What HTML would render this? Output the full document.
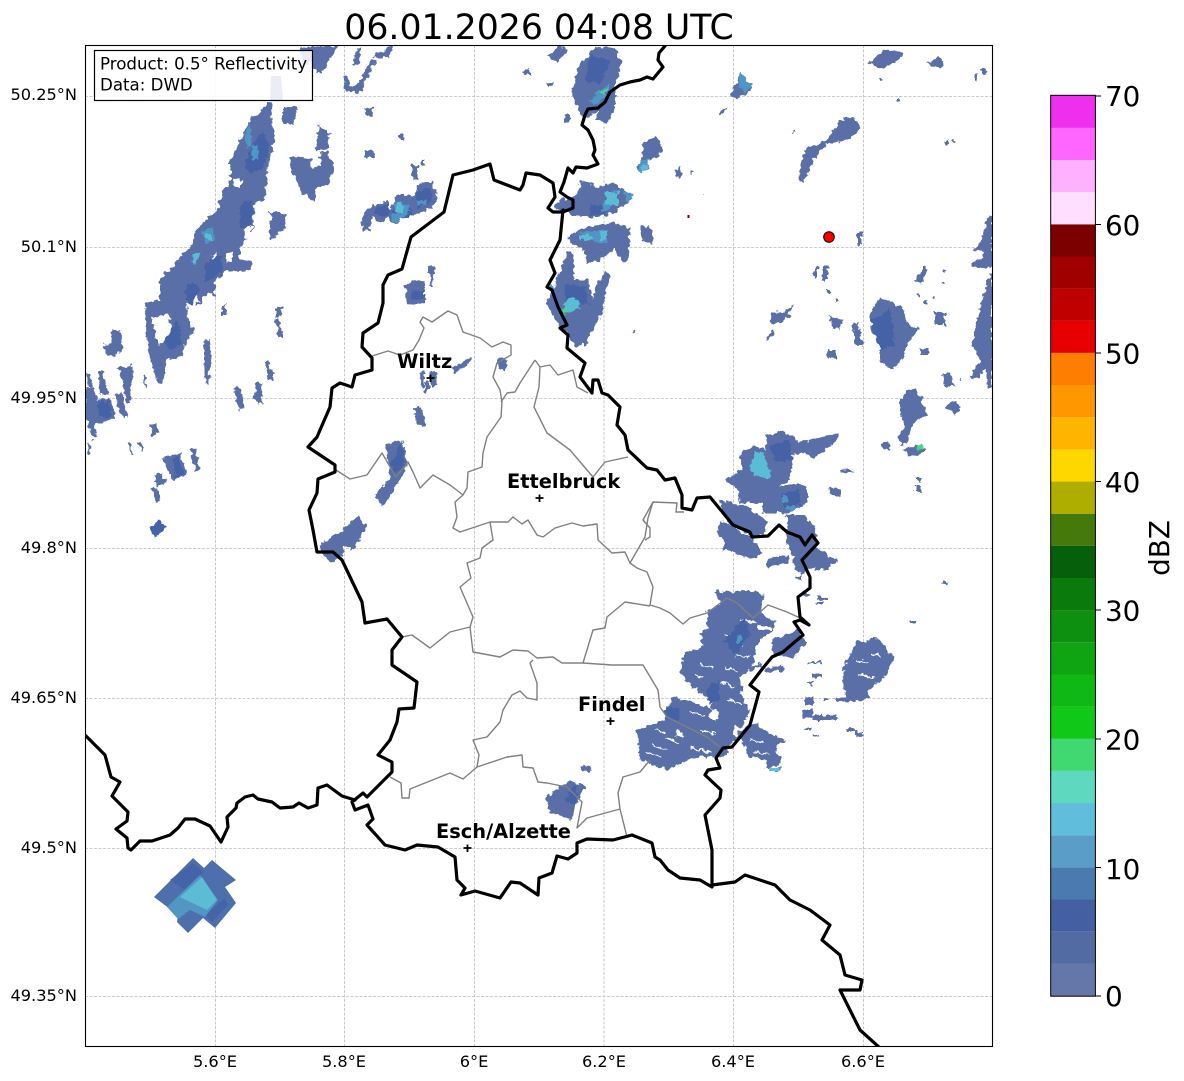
<!DOCTYPE html>
<html><head><meta charset="utf-8"><title>Radar</title>
<style>html,body{margin:0;padding:0;background:#fff}svg{display:block}text{font-family:"DejaVu Sans","Liberation Sans",sans-serif;fill:#000}</style>
</head><body>
<svg xmlns="http://www.w3.org/2000/svg" width="1184" height="1081" viewBox="0 0 1184 1081">
<defs><clipPath id="ax"><rect x="85.5" y="45.5" width="907" height="1001"/></clipPath>
<filter id="r" x="0" y="0" width="1184" height="1081" filterUnits="userSpaceOnUse" color-interpolation-filters="sRGB"><feTurbulence type="fractalNoise" baseFrequency=".2" numOctaves="2" seed="3" result="n"/><feDisplacementMap in="SourceGraphic" in2="n" scale="7" xChannelSelector="R" yChannelSelector="G"/></filter></defs>
<rect width="1184" height="1081" fill="#fff"/>
<text x="539" y="39" font-size="34.7" text-anchor="middle">06.01.2026 04:08 UTC</text>
<g clip-path="url(#ax)">
<!-- grid -->
<g stroke="#bdbdbd" stroke-width=".8" stroke-dasharray="3 1.5" fill="none">
<path d="M215.5 45V1046M344.5 45V1046M474.5 45V1046M604 45V1046M733.5 45V1046M863.5 45V1046"/>
<path d="M85 96.5H992M85 247.5H992M85 398.5H992M85 548.5H992M85 698.5H992M85 848.5H992M85 996.5H992"/>
</g>
<g filter="url(#r)">
<!-- radar base -->
<path fill="#5a6fa8" d="M300 47L340 45 332 55 322 72 316 72 312 62 303 65ZM357 47L362 47 358 65 352 65ZM373 56L390 47 395 45 388 58 380 58ZM343 76L345 90 360 93 370 72 377 62 372 58 365 70 358 85 350 86 347 76Z
M267 102L273 102 272 120 275 140 267 172 265 200 255 202 253 230 240 247 240 260 252 262 252 270 223 272 215 283 215 295 208 293 197 307 187 303 188 320 195 330 183 347 182 357 167 360 163 383 158 383 147 347 145 303 160 300 160 278 173 267 192 243 195 230 218 210 223 188 230 183 230 160 250 120 262 110Z
M283 107L298 107 293 125 283 123ZM316 124L330 133 327 150 316 150 320 125ZM291 156L312 158 310 168 322 167 320 152 328 152 334 168 328 185 317 187 315 203 302 193 290 165ZM270 212L280 212 287 215 284 230 272 240 270 240ZM365 108H373V116H365ZM365 150H375V158H365ZM400 133H404V140H400ZM412 165H418V180H412ZM422 160H425V167H422Z
M362 217L368 208 387 200 390 210 397 195 415 195 420 182 433 183 437 197 432 208 415 215 400 217 400 223 392 223 388 217 382 223 372 217 370 230 363 230Z
M405 285L418 280 425 283 425 302 420 303 410 305 406 298ZM427 267H435V273H433L432 287H430L430 273H427Z
M451 368L467 360 472 356 473 360 462 368 454 373ZM497 358L508 359 505 370 500 370ZM425 382H429V393H425ZM429 372H437V385H431ZM420 372H424V388H421Z
M413 407L420 407 427 425 421 428 416 420ZM386 445L403 440 407 460 402 478 382 508 375 493 390 480 387 453Z
M320 545L333 535 343 530 358 515 367 527 353 550 343 545 343 555 332 563 323 557Z
M545 798L567 782 577 783 585 787 575 807 570 820 550 812ZM583 765L593 769 590 774 581 769Z
M85 388L93 387 97 400 110 397 116 418 95 424 97 438 93 439 85 415ZM98 372H103L108 395H100ZM104 345L112 343 112 330 121 330 122 353 107 357ZM118 367L132 365 133 377 130 403 127 403 122 380ZM114 395L122 393 127 417 123 417 117 405ZM87 373H90L92 387H88Z
M149 425L156 423 159 434 153 436ZM163 458L180 453 188 475 173 481ZM154 475L162 472 167 483 157 486ZM152 488L157 487 161 499 156 501ZM190 449L196 448 200 470 196 472ZM234 389L241 388 244 408 239 410ZM256 383L261 382 263 403 257 405 254 397ZM265 370L274 369 274 378 267 381ZM266 360H269V370H266ZM204 340L210 339 211 360 208 385 206 385 204 363ZM128 443L131 443 133 455 131 455ZM138 441L141 441 143 452 141 452ZM86 442H89L90 455H88ZM142 375H145L147 388H145ZM275 320H279L283 337H279ZM275 307H283L280 318H275ZM222 305H226V315H222Z
M731 95L740 73 752 85 750 92 737 99ZM718 115L723 108 728 108 722 115ZM867 63L885 50 903 52 900 58 888 67 882 67 873 65ZM927 62L940 57 944 62 940 68 932 67ZM980 70L984 68 988 73 984 75ZM975 74H978V78H975ZM798 180L805 150 827 140 840 120 853 117 860 127 853 137 840 142 828 143 815 157 810 170 802 182Z
M642 160L643 143 655 135 663 147 658 157 648 160 648 170 638 172 635 167ZM675 170L680 167 682 175 677 178ZM642 227L650 225 653 243 648 243 642 238ZM857 233H862V245H857Z
M973 250L980 243 988 217 992 215V267L973 268 973 262 983 258 982 252ZM972 343L980 307 990 273 992 273V387H987V367L977 378 970 377 980 360Z
M870 313L880 298 903 307 907 323 920 330 910 340 903 357 893 370 880 360 880 340 872 333ZM770 313L787 310 793 305 788 318 772 325ZM767 337L773 330 774 335 768 340ZM853 323H858L863 345H855ZM917 277L926 265 928 270 921 285 915 280ZM935 312H945V325H935ZM827 350H837V358H827ZM920 348H928V355H920ZM942 373L950 373 955 387 945 387ZM822 267H828V280H822ZM813 270H818V277H813ZM828 315L842 320 840 330 832 328Z
M725 480L742 470 740 452 753 447 767 450 765 436 783 431 800 442 838 433 837 440 822 452 812 458 803 452 792 455 790 480 778 487 800 483 807 488 807 503 787 513 763 513 762 503 740 503 738 493 737 488Z
M718 500L750 508 768 522 765 533 752 537 730 525ZM716 533L722 520 753 540 763 553 752 559 723 550 725 542ZM766 558L788 555 790 562 768 567ZM785 515L803 515 813 525 818 533 815 547 828 555 838 560 828 567 810 568 802 575 795 570 793 558 790 550 785 540 788 525ZM842 469L853 470 853 473 842 473ZM829 488L842 489 842 497 832 496Z
M900 400L922 400 927 415 913 423 907 443 900 445 898 438 905 427 900 415ZM905 392L915 388 922 400H902ZM945 407L953 400 962 407 955 415ZM902 450L917 445 927 450 915 457 907 455ZM882 443H890V450H885ZM917 478H921V481H917ZM915 486H921V491H915Z
M715 590L727 592 745 590 765 595 760 613 775 622 772 630 758 643 752 667 762 663 740 693 747 705 750 710 740 730 755 723 768 733 785 740 775 747 783 762 773 768 765 768 767 760 748 757 740 737 727 747 728 755 713 757 693 757 668 770 640 760 637 730 665 720 672 697 712 708 713 702 692 687 680 672 685 653 703 647 700 633 708 627 707 610 720 605Z
M772 640L797 630 807 643 793 657 773 657ZM765 668L783 665 785 670 766 672ZM815 567H828V570H815ZM802 592H810V597H802ZM797 575H803V580H797Z
M845 663L857 642 878 638 888 653 895 657 888 670 882 680 870 687 868 697 860 702 845 702 843 673ZM805 697H813V705H805ZM803 710H813V718H803ZM813 715H837V720H813ZM813 673H822V678H813ZM807 682H813V684H807ZM807 661H822V663H807ZM847 728H855V732H847ZM855 732H863V737H855ZM817 597H828V600H817ZM817 602H823V604H817ZM910 620H917V623H910ZM942 582H948V584H942ZM823 698H828V701H823ZM837 698H845V701H837ZM804 728H811V730H804ZM812 735H820V737H812Z
M573 90L578 67 595 47 615 47 622 63 615 87 615 107 608 123 595 120 597 112 583 118 575 103ZM547 55L560 47 568 50 557 62ZM524 70L530 70 530 75 524 75ZM564 115H570V122H564ZM548 82H552V86H548Z
M553 207L560 200 575 197 582 180 598 187 613 183 633 195 628 203 613 213 600 217 573 217 567 210 557 210ZM568 237L582 228 612 223 630 227 630 243 627 262 622 260 615 248 600 260 587 263 583 247 573 245ZM547 303L557 280 567 253 573 253 574 280 588 280 592 300 597 285 604 273 610 273 606 293 600 318 590 335 585 345 575 345 568 335 560 327 550 310ZM632 330H635V333H632ZM880 78H883V82H880Z
M849 128H852V131H849ZM792 130H795V133H792ZM945 140H948V145H945ZM953 140H955V143H953ZM975 78H978V80H975ZM897 97H900V100H897ZM692 172H694V175H692ZM702 194H704V196H702ZM816 266H819V270H816ZM826 290H829V293H826ZM836 300H838V303H836ZM898 330H901V333H898ZM925 301H928V304H925ZM917 294H919V296H917ZM943 270H946V273H943ZM941 281H944V284H941ZM932 296H935V299H932ZM960 378H962V381H960Z"/>
<!-- holes -->
<path fill="#fff" d="M152 318L168 314 174 335 158 345ZM188 300L194 288 198 300 195 310ZM232 178L243 180 240 188 233 187ZM244 226L252 224 252 245 246 247ZM212 255L218 254 218 263 212 263ZM227 253L232 252 232 262 226 262ZM747 670L762 668 745 692 740 680ZM712 708L720 712 716 722 708 716ZM735 725L742 728 737 738 732 734ZM678 730L684 732 681 738 676 736ZM758 625L772 627 770 630 758 630Z"/>
<path stroke="#fff" stroke-width="1.4" fill="none" d="M741 620L757 623M725 635L740 638M730 645L742 647M735 655L750 658M700 665L712 668M695 675L705 678M725 668L738 671M720 683L735 686M728 700L742 703M665 738L680 742M652 745L668 750M645 752L660 757M655 730L665 733M690 712L705 716M700 730L715 734M690 748L712 752M750 740L762 743M755 752L770 754M855 660L868 662M872 655L880 656M858 675L875 677"/>
<!-- radar dark -->
<path fill="#4662a6" d="M245 160L262 130 270 145 262 170 248 172ZM240 205L252 200 252 225 240 228ZM205 262L222 255 223 272 205 283ZM185 290L192 280 200 290 190 305ZM165 340L178 320 182 345 170 350ZM97 405L108 400 112 415 100 418ZM172 458L178 456 184 475 176 478ZM391 210L410 207 412 216 392 218ZM375 208L388 204 388 215 375 215ZM416 190L430 188 432 203 416 208ZM390 462L402 452 405 465 395 475ZM395 450L402 445 404 455 398 458ZM425 290L410 292 412 300 424 298ZM150 528L160 520 165 528 155 538ZM570 790L578 785 575 805 565 800ZM770 445L790 440 792 460 775 462ZM780 495L800 490 800 505 785 510ZM725 640L745 618 750 635 735 655ZM705 690L718 680 720 700 710 705ZM665 705L680 710 678 722 665 718ZM870 320L890 310 895 345 880 350ZM590 205L608 205 605 215 590 215ZM590 55L610 60 600 85 585 80ZM565 285L585 285 590 305 565 300Z"/>
<!-- radar light blue -->
<path fill="#5096c4" d="M245 135L250 125 252 145 246 148ZM252 145H258V160H252ZM203 232L212 225 215 240 205 243ZM192 254H198V265H192ZM393 203L410 205 408 214 398 218ZM392 213H400V222H393ZM416 200H425V205H416ZM578 233L607 230 608 242 595 243 590 237ZM600 207L612 190 620 190 613 207 603 212ZM623 190L633 195 628 203ZM640 160L650 160 647 170 638 172ZM590 100L603 87 610 83 603 98 595 105ZM548 288L552 285 555 290ZM740 73L752 85 745 92 738 85ZM782 495H787V503H782ZM786 505H795V510H786ZM736 635H742V642H736ZM778 768H783V770H773Z"/>
<path fill="#5bbcd6" d="M750 467L755 450 765 455 772 478 755 477ZM562 307L570 297 578 300 580 308 565 315ZM193 253L200 252 198 262 193 262ZM205 233H212V240H205ZM397 203H403V213H397ZM578 235H592V240H580ZM600 232H607V240H600ZM605 192H618V205H605ZM603 92L608 86 605 96ZM642 165H647V170H642Z"/>
<path fill="#45d880" d="M562 310L568 308 565 316ZM600 93L607 87 603 96ZM915 447L922 445 923 449 917 450Z"/>
</g>
<rect x="769" y="768" width="10" height="3" fill="#62bfdc"/>
<rect x="687.5" y="215" width="2" height="3" fill="#800000"/>
<!-- diamond -->
<path fill="#4d6fab" d="M154 897L193 858 204 868 212 860 236 880 225 887 236 903 215 928 203 918 188 933 177 922 178 915Z"/>
<path fill="#4564a8" d="M170 880L193 863 204 872 185 890ZM205 915L225 898 228 905 212 922Z"/>
<path fill="#5097c4" d="M167 907L200 875 218 900 205 917 190 910 178 919Z"/>
<path fill="#5cbcd6" d="M180 897L202 877 217 900 207 910Z"/>
<!-- gray borders -->
<g fill="none" stroke="#808080" stroke-width="1.4" stroke-linejoin="round">
<path d="M372 356L388 351 400 355 413 350 419 340 424 328 420 322 423 317 432 322 448 311 457 315 463 332 480 338 492 347 503 342 511 345 511 355 497 363 493 377 500 390 502 402 501 417 487 437 483 453 482 467 468 472 467 488 463 495 455 502 457 517 453 528 460 532 490 522 508 522 513 517 522 524 528 520 537 535 543 537 555 528 572 523 583 526 597 524 598 540 612 553 625 552 630 563 637 568 647 572 653 587 650 605 660 608 670 613 683 624 690 618 707 613 727 598 737 603 753 618 768 605 787 612 800 618"/>
<path d="M630 563L645 537 648 518 653 502 677 503 676 512 684 512M653 502L643 520 650 528 650 537 645 540"/>
<path d="M535 360L540 367 550 365 558 375 573 370 577 387 588 393M535 360L520 383 515 392 507 393 501 402M540 367L539 387 534 407 547 433 570 450 593 477 605 462 628 457"/>
<path d="M336 470L350 479 367 475 382 453 396 477 408 462 413 472 420 488 433 475 450 485 463 495"/>
<path d="M402 637L412 635 430 648 450 632 470 627 473 617 460 587 471 578 467 563 480 558 482 548 493 540 490 522M470 627L473 652 500 657 513 650 528 651 537 658 553 657 562 663 583 663 593 630 605 628 607 617 625 602 650 606"/>
<path d="M583 663L612 665 643 665 658 690 660 707 667 717 683 725 707 737 720 747M533 660L530 663 537 683 537 700 527 698 520 691 512 695 503 710 500 722 487 737 473 740 479 755 477 767 463 779 450 773 410 789 409 798 402 798 401 783 390 777"/>
<path d="M477 767L507 757 522 755 523 767 533 768 538 782 547 783 567 787 582 802 577 828 587 818 620 809 627 837M620 809L618 793 623 777 640 772 650 760"/>
</g>
<!-- black borders -->
<g fill="none" stroke="#000" stroke-width="3.2" stroke-linejoin="round" stroke-linecap="round">
<path d="M665 46L659 53 658 60 663 67 658 73 653 79 647 77 640 80 630 82 620 85 610 92 605 102 598 108 588 109 585 115 582 125 588 130 593 140 595 150 593 155 598 164 587 168 576 167 573 173 568 168 564 182 560 192 567 197 573 200 573 208 563 212 553 212 548 208 555 197 553 183 540 175 526 173 523 185 520 190 494 180 490 164 473 170 453 175 444 212 411 237 402 269 388 275 383 285 383 303 378 323 363 333 362 347 372 358 372 370 355 375 352 387 340 383 332 388 330 407 317 437 308 447 335 465 335 472 318 479 317 493 309 510 313 530 317 552 333 552 342 560 362 602 365 623 387 619 402 637 392 650 392 665 417 682 414 708 399 709 397 722 390 740 378 755 392 762 392 772 367 797 363 793 352 802 355 810 368 805 373 819 367 825 385 845 405 850 417 845 438 847 455 857 457 880 465 888 461 895 475 891 500 898 511 882 520 883 538 895 539 878 552 873 557 856 568 859 577 853 577 843 587 839 613 840 632 835 652 843 655 857 660 860 668 870 680 878 700 880 712 887 712 850 705 815 720 798 721 790 705 775 708 770 720 768 716 758 723 748 732 747 750 725 759 692 750 685 763 668 772 657 783 652 803 635 794 622 800 620 809 625 800 617 798 597 810 588 810 577 802 560 818 543 812 535 805 545 800 537 787 532 779 525 768 536 752 537 750 532 733 525 710 497 697 498 692 510 682 508 682 495 675 478 665 480 657 470 647 468 628 450 625 435 617 425 620 407 608 395 602 393 598 380 593 380 592 393 580 377 585 363 567 348 568 335 560 328 567 325 558 307 552 290 547 287 555 273 550 260 560 240 563 210"/>
<path d="M712 885L735 882 745 875 760 880 775 885 790 900 810 910 830 925 822 940 840 955 845 975 862 980 860 990 840 990 850 1010 860 1030 880 1048"/>
<path d="M85 735L105 755 111 777 120 782 112 796 128 812 127 821 116 829 127 838 128 848 131 850 140 841 152 841 170 835 178 828 185 819 195 819 210 826 221 842 228 827 227 817 236 808 237 803 245 797 253 795 258 799 272 802 280 808 293 807 299 803 308 808 317 805 318 788 327 785 342 796 355 800"/>
</g>
<!-- faint streak under legend -->
<path fill="#5a6fa8" d="M271 76L281 76 283 100 270 100Z"/>
</g>
<!-- legend -->
<rect x="94.5" y="50.5" width="218" height="50" fill="#fff" fill-opacity=".88" stroke="#000" stroke-width="1.2"/>
<text x="100" y="69.5" font-size="16.65">Product: 0.5° Reflectivity</text>
<text x="100" y="90.5" font-size="16.65">Data: DWD</text>
<!-- frame -->
<rect x="85.5" y="45.5" width="907" height="1001" fill="none" stroke="#000" stroke-width="1.1"/>
<!-- city labels -->
<g font-size="19.4" font-weight="700">
<text x="397" y="368">Wiltz</text>
<text x="507" y="488">Ettelbruck</text>
<text x="578" y="711">Findel</text>
<text x="436" y="838">Esch/Alzette</text>
</g>
<g stroke="#000" stroke-width="1.8" fill="none">
<path d="M426.5 378H434.5M430.5 374.5V382M535.5 498H543.5M539.5 494.5V502M606.5 721H614.5M610.5 717.5V725M463.5 848H471.5M467.5 844.5V852"/>
</g>
<circle cx="829" cy="237" r="5.3" fill="#ff0000" stroke="#000" stroke-width="1"/>
<!-- axis labels -->
<g font-size="16.2" text-anchor="end">
<text x="77" y="100">50.25°N</text>
<text x="77" y="252">50.1°N</text>
<text x="77" y="403">49.95°N</text>
<text x="77" y="553">49.8°N</text>
<text x="77" y="703">49.65°N</text>
<text x="77" y="853">49.5°N</text>
<text x="77" y="1001">49.35°N</text>
</g>
<g font-size="16.2" text-anchor="middle">
<text x="215" y="1067">5.6°E</text>
<text x="344" y="1067">5.8°E</text>
<text x="474" y="1067">6°E</text>
<text x="604" y="1067">6.2°E</text>
<text x="733" y="1067">6.4°E</text>
<text x="863" y="1067">6.6°E</text>
</g>
<!-- colorbar -->
<g>
<rect x="1051" y="963.8" width="44" height="32.3" fill="#6577a8"/>
<rect x="1051" y="931.7" width="44" height="32.2" fill="#526ba2"/>
<rect x="1051" y="899.5" width="44" height="32.2" fill="#4460a3"/>
<rect x="1051" y="867.4" width="44" height="32.2" fill="#4a7ab0"/>
<rect x="1051" y="835.2" width="44" height="32.2" fill="#5a9dc8"/>
<rect x="1051" y="803" width="44" height="32.2" fill="#60bedc"/>
<rect x="1051" y="770.9" width="44" height="32.2" fill="#5fd8c0"/>
<rect x="1051" y="738.7" width="44" height="32.2" fill="#40d870"/>
<rect x="1051" y="706.6" width="44" height="32.2" fill="#10c818"/>
<rect x="1051" y="674.4" width="44" height="32.2" fill="#0fb814"/>
<rect x="1051" y="642.3" width="44" height="32.2" fill="#0fa512"/>
<rect x="1051" y="610.1" width="44" height="32.2" fill="#0d8f10"/>
<rect x="1051" y="578" width="44" height="32.2" fill="#0b7a0d"/>
<rect x="1051" y="545.8" width="44" height="32.2" fill="#065f0a"/>
<rect x="1051" y="513.7" width="44" height="32.2" fill="#457a0a"/>
<rect x="1051" y="481.5" width="44" height="32.2" fill="#aeae00"/>
<rect x="1051" y="449.4" width="44" height="32.2" fill="#ffd700"/>
<rect x="1051" y="417.2" width="44" height="32.2" fill="#ffb400"/>
<rect x="1051" y="385" width="44" height="32.2" fill="#ff9800"/>
<rect x="1051" y="352.9" width="44" height="32.2" fill="#ff7d00"/>
<rect x="1051" y="320.7" width="44" height="32.2" fill="#e60000"/>
<rect x="1051" y="288.6" width="44" height="32.2" fill="#c00000"/>
<rect x="1051" y="256.4" width="44" height="32.2" fill="#a00000"/>
<rect x="1051" y="224.3" width="44" height="32.2" fill="#7d0000"/>
<rect x="1051" y="192.1" width="44" height="32.2" fill="#ffdfff"/>
<rect x="1051" y="160" width="44" height="32.2" fill="#ffb0ff"/>
<rect x="1051" y="127.8" width="44" height="32.2" fill="#ff66ff"/>
<rect x="1051" y="95.5" width="44" height="32.4" fill="#ee30ee"/>
</g>
<rect x="1050.7" y="95.3" width="44.7" height="900.9" fill="none" stroke="#000" stroke-width="1"/>
<path d="M1095 96H1101M1095 224.5H1101M1095 353H1101M1095 481.5H1101M1095 610H1101M1095 739H1101M1095 867.5H1101M1095 996H1101" stroke="#000" stroke-width="1" fill="none"/>
<g font-size="27.8">
<text x="1105" y="106">70</text>
<text x="1105" y="235">60</text>
<text x="1105" y="363.5">50</text>
<text x="1105" y="492">40</text>
<text x="1105" y="620.5">30</text>
<text x="1105" y="749.5">20</text>
<text x="1105" y="879">10</text>
<text x="1105" y="1006">0</text>
</g>
<text transform="translate(1169 548) rotate(-90)" font-size="27.8" text-anchor="middle">dBZ</text>
</svg>
</body></html>
